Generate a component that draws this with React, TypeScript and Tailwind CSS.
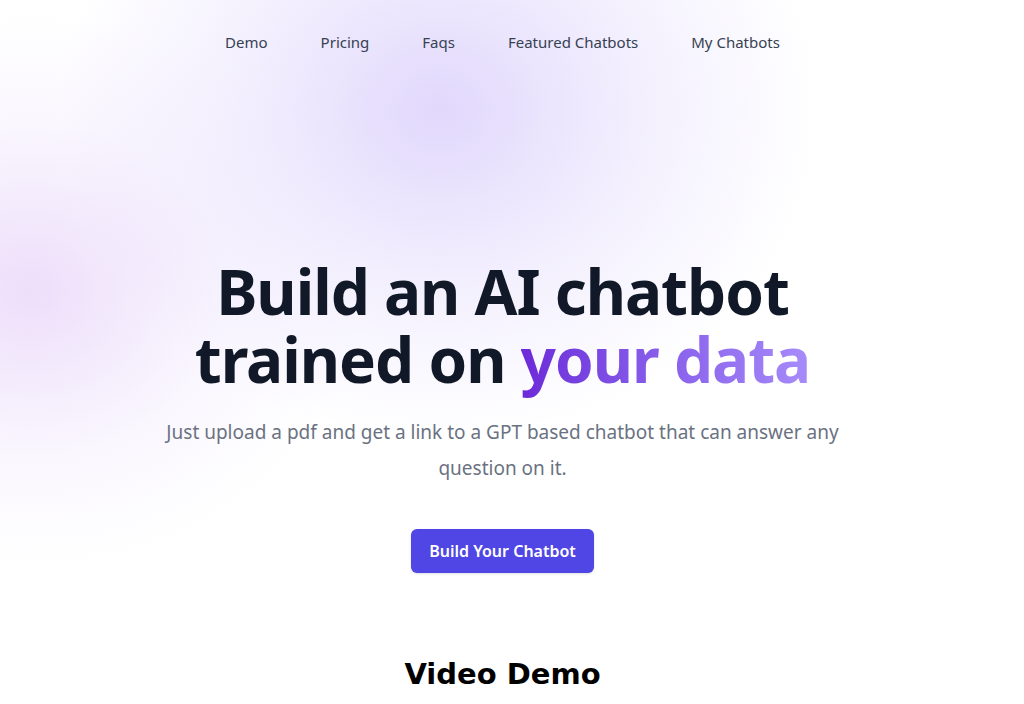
import React from 'react';

const navItems = ['Demo', 'Pricing', 'Faqs', 'Featured Chatbots', 'My Chatbots'];

const App: React.FC = () => {
  return (
    <div className="relative min-h-[704px] w-full overflow-hidden bg-white font-['Noto_Sans',sans-serif]">
      {/* soft purple glows behind the hero */}
      <div className="pointer-events-none absolute left-[60px] top-[-220px] h-[660px] w-[760px] rounded-full bg-[radial-gradient(closest-side,rgba(205,190,250,0.6),rgba(225,216,252,0.38)_55%,rgba(255,255,255,0))]" />
      <div className="pointer-events-none absolute left-[-300px] top-[10px] h-[560px] w-[660px] rounded-full bg-[radial-gradient(closest-side,rgba(222,194,246,0.55),rgba(236,226,252,0.28)_60%,rgba(255,255,255,0))]" />

      <div className="relative flex flex-col items-center pr-[19px]">
        <nav className="flex items-center gap-[53px] pt-[31px] text-[15px] text-gray-700">
          {navItems.map((item) => (
            <a key={item} href="#" className="leading-[22px]">
              {item}
            </a>
          ))}
        </nav>

        <h1 className="mt-[204px] text-center text-[62px] font-bold leading-[68px] tracking-[-1px] text-[#111827]">
          Build an AI chatbot
          <br />
          trained on{' '}
          <span className="bg-gradient-to-r from-[#6d28d9] to-[#a78bfa] bg-clip-text text-transparent">
            your data
          </span>
        </h1>

        <p className="mt-[21px] max-w-[700px] text-center text-[19px] leading-[36px] text-gray-500">
          Just upload a pdf and get a link to a GPT based chatbot that can answer any question on it.
        </p>

        <button className="mt-[43px] h-[44px] rounded-md bg-[#4f46e5] px-[18px] text-[16px] font-semibold text-white shadow-sm">
          Build Your Chatbot
        </button>

        <h2 className="mt-[80px] font-['DejaVu_Sans',sans-serif] text-[29px] font-bold text-black">
          Video Demo
        </h2>
      </div>
    </div>
  );
};

export default App;
